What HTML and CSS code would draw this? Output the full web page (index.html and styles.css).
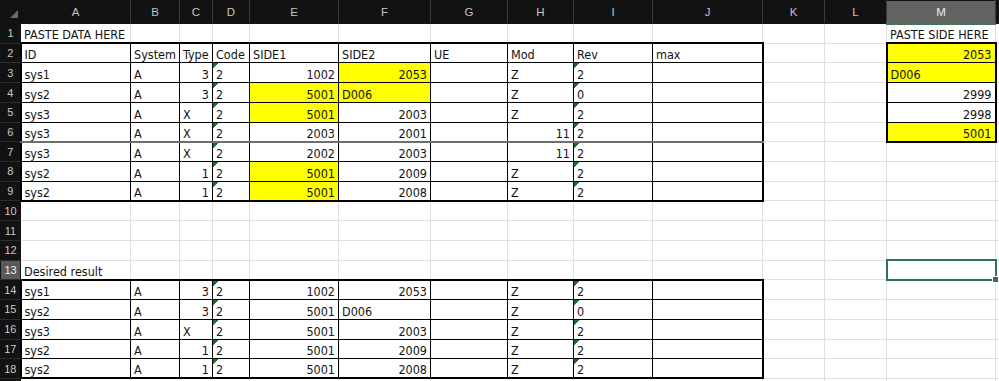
FILE: index.html
```html
<!DOCTYPE html>
<html lang="en">
<head>
<meta charset="utf-8">
<title>Sheet</title>
<link rel="stylesheet" href="styles.css">
</head>
<body>
<table class="sheet">
  <colgroup>
    <col class="col-rh"><col class="col-a"><col class="col-b"><col class="col-c"><col class="col-d"><col class="col-e"><col class="col-f"><col class="col-g"><col class="col-h"><col class="col-i"><col class="col-j"><col class="col-k"><col class="col-l"><col class="col-m"><col class="col-n">
  </colgroup>
  <thead>
    <tr class="hdr">
      <th class="corner"><svg width="20" height="22" viewBox="0 0 20 22"><polygon points="17,9 17,17 9,17" fill="#6a6a6a"/></svg></th>
      <th class="ch">A</th><th class="ch">B</th><th class="ch">C</th><th class="ch">D</th><th class="ch">E</th><th class="ch">F</th><th class="ch">G</th><th class="ch">H</th><th class="ch">I</th><th class="ch">J</th><th class="ch">K</th><th class="ch">L</th><th class="ch ch-sel">M</th><th class="ch"></th>
    </tr>
  </thead>
  <tbody>
    <tr class="row">
      <th class="rh">1</th>
      <td>PASTE DATA HERE</td><td></td><td></td><td></td><td></td><td></td><td></td><td></td><td></td><td></td><td></td><td></td><td>PASTE SIDE HERE</td><td></td>
    </tr>
    <tr class="row">
      <th class="rh">2</th>
      <td class="tb tT tL">ID</td><td class="tb tT">System</td><td class="tb tT">Type</td><td class="tb tT">Code</td><td class="tb tT">SIDE1</td><td class="tb tT">SIDE2</td><td class="tb tT">UE</td><td class="tb tT">Mod</td><td class="tb tT">Rev</td><td class="tb tT tR">max</td><td></td><td></td><td class="tb tT tL tR y n">2053</td><td></td>
    </tr>
    <tr class="row">
      <th class="rh">3</th>
      <td class="tb tL">sys1</td><td class="tb">A</td><td class="tb n">3</td><td class="tb e">2</td><td class="tb n">1002</td><td class="tb y n">2053</td><td class="tb"></td><td class="tb">Z</td><td class="tb e">2</td><td class="tb tR"></td><td></td><td></td><td class="tb tL tR y">D006</td><td></td>
    </tr>
    <tr class="row">
      <th class="rh">4</th>
      <td class="tb tL">sys2</td><td class="tb">A</td><td class="tb n">3</td><td class="tb e">2</td><td class="tb y n">5001</td><td class="tb y">D006</td><td class="tb"></td><td class="tb">Z</td><td class="tb e">0</td><td class="tb tR"></td><td></td><td></td><td class="tb tL tR n">2999</td><td></td>
    </tr>
    <tr class="row">
      <th class="rh">5</th>
      <td class="tb tL">sys3</td><td class="tb">A</td><td class="tb">X</td><td class="tb e">2</td><td class="tb y n">5001</td><td class="tb n">2003</td><td class="tb"></td><td class="tb">Z</td><td class="tb e">2</td><td class="tb tR"></td><td></td><td></td><td class="tb tL tR n">2998</td><td></td>
    </tr>
    <tr class="row">
      <th class="rh">6</th>
      <td class="tb tL gb">sys3</td><td class="tb gb">A</td><td class="tb gb">X</td><td class="tb e gb">2</td><td class="tb n gb">2003</td><td class="tb n gb">2001</td><td class="tb gb"></td><td class="tb n gb">11</td><td class="tb e gb">2</td><td class="tb tR gb"></td><td></td><td></td><td class="tb tL tR tB y n">5001</td><td></td>
    </tr>
    <tr class="row">
      <th class="rh">7</th>
      <td class="tb tL">sys3</td><td class="tb">A</td><td class="tb">X</td><td class="tb e">2</td><td class="tb n">2002</td><td class="tb n">2003</td><td class="tb"></td><td class="tb n">11</td><td class="tb e">2</td><td class="tb tR"></td><td></td><td></td><td></td><td></td>
    </tr>
    <tr class="row">
      <th class="rh">8</th>
      <td class="tb tL">sys2</td><td class="tb">A</td><td class="tb n">1</td><td class="tb e">2</td><td class="tb y n">5001</td><td class="tb n">2009</td><td class="tb"></td><td class="tb">Z</td><td class="tb e">2</td><td class="tb tR"></td><td></td><td></td><td></td><td></td>
    </tr>
    <tr class="row">
      <th class="rh">9</th>
      <td class="tb tL tB">sys2</td><td class="tb tB">A</td><td class="tb tB n">1</td><td class="tb tB e">2</td><td class="tb tB y n">5001</td><td class="tb tB n">2008</td><td class="tb tB"></td><td class="tb tB">Z</td><td class="tb tB e">2</td><td class="tb tB tR"></td><td></td><td></td><td></td><td></td>
    </tr>
    <tr class="row">
      <th class="rh">10</th>
      <td></td><td></td><td></td><td></td><td></td><td></td><td></td><td></td><td></td><td></td><td></td><td></td><td></td><td></td>
    </tr>
    <tr class="row">
      <th class="rh">11</th>
      <td></td><td></td><td></td><td></td><td></td><td></td><td></td><td></td><td></td><td></td><td></td><td></td><td></td><td></td>
    </tr>
    <tr class="row">
      <th class="rh">12</th>
      <td></td><td></td><td></td><td></td><td></td><td></td><td></td><td></td><td></td><td></td><td></td><td></td><td></td><td></td>
    </tr>
    <tr class="row">
      <th class="rh rh-sel">13</th>
      <td>Desired result</td><td></td><td></td><td></td><td></td><td></td><td></td><td></td><td></td><td></td><td></td><td></td><td class="sel"></td><td></td>
    </tr>
    <tr class="row">
      <th class="rh">14</th>
      <td class="tb tT tL">sys1</td><td class="tb tT">A</td><td class="tb tT n">3</td><td class="tb tT e">2</td><td class="tb tT n">1002</td><td class="tb tT n">2053</td><td class="tb tT"></td><td class="tb tT">Z</td><td class="tb tT e">2</td><td class="tb tT tR"></td><td></td><td></td><td></td><td></td>
    </tr>
    <tr class="row">
      <th class="rh">15</th>
      <td class="tb tL">sys2</td><td class="tb">A</td><td class="tb n">3</td><td class="tb e">2</td><td class="tb n">5001</td><td class="tb">D006</td><td class="tb"></td><td class="tb">Z</td><td class="tb e">0</td><td class="tb tR"></td><td></td><td></td><td></td><td></td>
    </tr>
    <tr class="row">
      <th class="rh">16</th>
      <td class="tb tL">sys3</td><td class="tb">A</td><td class="tb">X</td><td class="tb e">2</td><td class="tb n">5001</td><td class="tb n">2003</td><td class="tb"></td><td class="tb">Z</td><td class="tb e">2</td><td class="tb tR"></td><td></td><td></td><td></td><td></td>
    </tr>
    <tr class="row">
      <th class="rh">17</th>
      <td class="tb tL">sys2</td><td class="tb">A</td><td class="tb n">1</td><td class="tb e">2</td><td class="tb n">5001</td><td class="tb n">2009</td><td class="tb"></td><td class="tb">Z</td><td class="tb e">2</td><td class="tb tR"></td><td></td><td></td><td></td><td></td>
    </tr>
    <tr class="row">
      <th class="rh">18</th>
      <td class="tb tL tB">sys2</td><td class="tb tB">A</td><td class="tb tB n">1</td><td class="tb tB e">2</td><td class="tb tB n">5001</td><td class="tb tB n">2008</td><td class="tb tB"></td><td class="tb tB">Z</td><td class="tb tB e">2</td><td class="tb tB tR"></td><td></td><td></td><td></td><td></td>
    </tr>
    <tr class="row">
      <th class="rh"></th>
      <td></td><td></td><td></td><td></td><td></td><td></td><td></td><td></td><td></td><td></td><td></td><td></td><td></td><td></td>
    </tr>
  </tbody>
</table>
</body>
</html>
```

FILE: styles.css
```css
html, body {
  margin: 0;
  padding: 0;
  background: #ffffff;
  overflow: hidden;
}

.sheet {
  border-collapse: collapse;
  table-layout: fixed;
  width: 1095px;
  font-family: "DejaVu Sans Condensed", "DejaVu Sans", sans-serif;
  font-stretch: condensed;
  font-size: 12.5px;
  color: #141414;
}

.col-rh { width: 20px; }
.col-a { width: 110px; }
.col-b { width: 49px; }
.col-c { width: 33px; }
.col-d { width: 37px; }
.col-e { width: 89px; }
.col-f { width: 92px; }
.col-g { width: 77px; }
.col-h { width: 66px; }
.col-i { width: 79px; }
.col-j { width: 110px; }
.col-k { width: 62px; }
.col-l { width: 62px; }
.col-m { width: 109px; }
.col-n { width: 100px; }

.hdr { height: 22px; }
.row { height: 19.72px; }

/* headers */
.corner {
  background: #121212;
  padding: 0;
  border: 1px solid #121212;
  line-height: 0;
}
.ch {
  background: #121212;
  color: #c3c3c3;
  font-family: "Liberation Sans", Arial, sans-serif;
  font-stretch: normal;
  font-weight: normal;
  font-size: 11.5px;
  text-align: center;
  vertical-align: middle;
  padding: 0;
  border: 1px solid #121212;
  border-left-color: #3a3a3a;
  border-right-color: #3a3a3a;
}
.ch-sel {
  background: #626262;
  color: #ececec;
  border-bottom: 2px solid #3d7a58;
}
.rh {
  background: #121212;
  color: #c8c8c8;
  font-family: "Liberation Sans", Arial, sans-serif;
  font-stretch: normal;
  font-weight: normal;
  font-size: 11px;
  text-align: center;
  vertical-align: middle;
  padding: 0;
  border: 1px solid #121212;
  border-top-color: #2c2c2c;
  border-bottom-color: #2c2c2c;
}
.rh-sel {
  background: #5a5a5a;
  color: #eeeeee;
}

/* cells */
td {
  border: 1px solid #e0e0e0;
  padding: 0 3px;
  vertical-align: bottom;
  white-space: nowrap;
  line-height: 14px;
  overflow: visible;
}
.tb { border: 1px solid #000; }
.tT { border-top: 2px solid #000; }
.tB { border-bottom: 2px solid #000; }
.tL { border-left: 2px solid #000; }
.tR { border-right: 2px solid #000; }
.gb { border-bottom: 2px solid #6e6e6e; }

.n { text-align: right; }
.y { background-color: #ffff00; }
.e {
  background-image: linear-gradient(135deg, #1f6b3a 0 3.6px, transparent 3.6px);
  background-repeat: no-repeat;
  background-size: 6px 6px;
}

.sel {
  position: relative;
  border: 2px solid #2f7350;
}
.sel::after {
  content: "";
  position: absolute;
  right: -4px;
  bottom: -4px;
  width: 5px;
  height: 5px;
  background: #2f7350;
  border: 1px solid #ffffff;
}
```
